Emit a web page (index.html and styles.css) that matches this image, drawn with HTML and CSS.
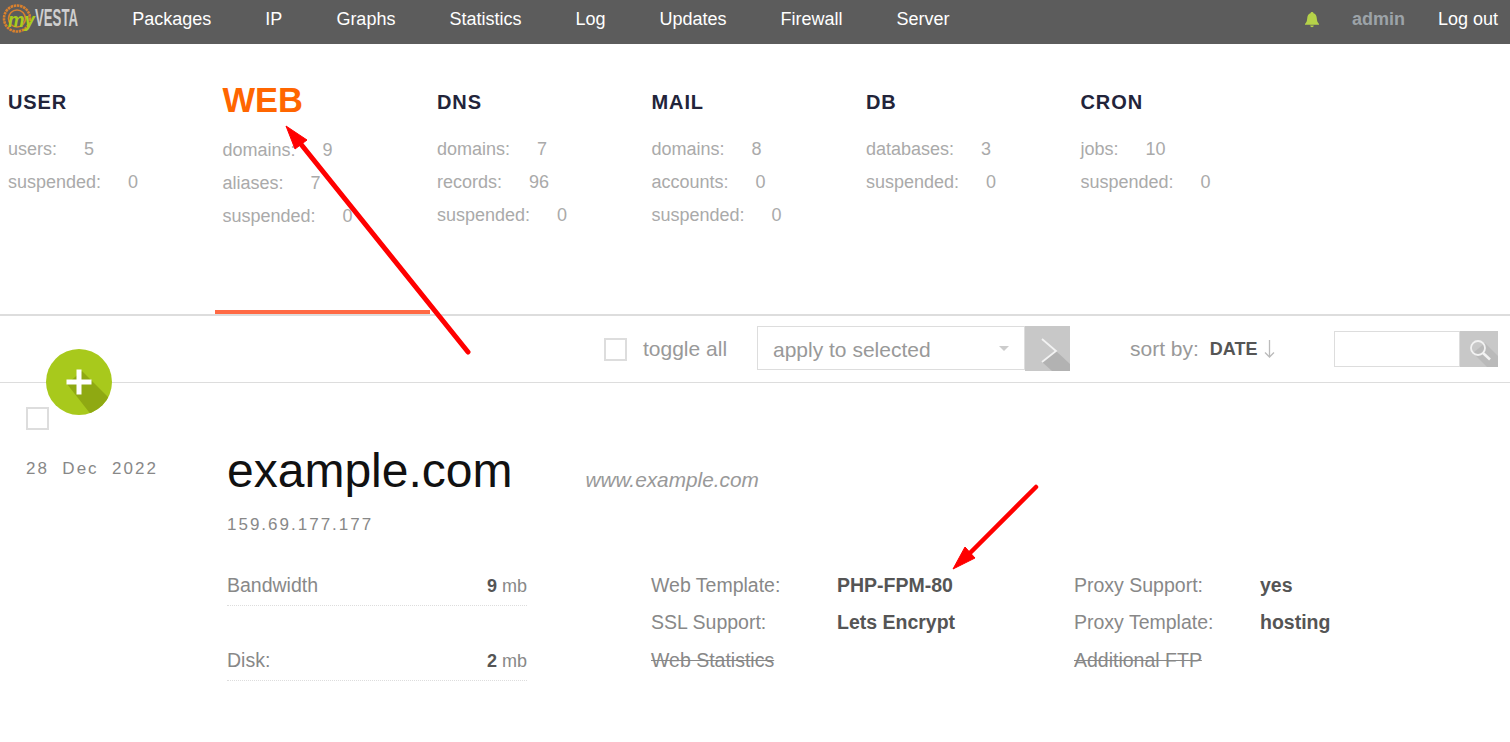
FILE: index.html
```html
<!DOCTYPE html>
<html lang="en">
<head>
<meta charset="utf-8">
<title>myVesta - WEB</title>
<link rel="stylesheet" href="styles.css">
</head>
<body>
<header class="nav">
  <a class="logo" href="#">
    <svg width="100" height="44" viewBox="0 0 100 44">
      <circle cx="17" cy="18.500" r="13" fill="none" stroke="#d9812e" stroke-width="2.600" stroke-dasharray="2.500 0.700"/>
      <circle cx="17" cy="18.500" r="8.500" fill="none" stroke="#d9812e" stroke-width="1.600"/>
      <text transform="translate(8 27) scale(.88 1)" class="logo-my">my</text>
      <text transform="translate(35 26) scale(.55 1)" class="logo-vesta">VESTA</text>
    </svg>
  </a>
  <nav class="menu">
    <a href="#">Packages</a><a href="#">IP</a><a href="#">Graphs</a><a href="#">Statistics</a><a href="#">Log</a><a href="#">Updates</a><a href="#">Firewall</a><a href="#">Server</a>
  </nav>
  <div class="nav-right">
    <svg class="bell" width="16" height="17" viewBox="0 0 16 17"><path d="M8 1c1 0 1.500.6 1.500 1.300C12 3 12.600 5 12.800 7.500c.2 2.500.8 4 2.200 5.500v.8H1V13c1.400-1.500 2-3 2.200-5.500C3.400 5 4 3 6.500 2.300 6.500 1.600 7 1 8 1zM6.200 14.500h3.600C9.600 15.600 9 16.200 8 16.200s-1.600-.6-1.800-1.700z" fill="#b5d249"/></svg>
    <a class="user" href="#">admin</a>
    <a class="logout" href="#">Log out</a>
  </div>
</header>

<section class="tabs">
  <div class="tab">
    <h2>USER</h2>
    <p>users: <b>5</b></p>
    <p>suspended: <b>0</b></p>
  </div>
  <div class="tab active">
    <h2>WEB</h2>
    <p>domains: <b>9</b></p>
    <p>aliases: <b>7</b></p>
    <p>suspended: <b>0</b></p>
  </div>
  <div class="tab">
    <h2>DNS</h2>
    <p>domains: <b>7</b></p>
    <p>records: <b>96</b></p>
    <p>suspended: <b>0</b></p>
  </div>
  <div class="tab">
    <h2>MAIL</h2>
    <p>domains: <b>8</b></p>
    <p>accounts: <b>0</b></p>
    <p>suspended: <b>0</b></p>
  </div>
  <div class="tab">
    <h2>DB</h2>
    <p>databases: <b>3</b></p>
    <p>suspended: <b>0</b></p>
  </div>
  <div class="tab">
    <h2>CRON</h2>
    <p>jobs: <b>10</b></p>
    <p>suspended: <b>0</b></p>
  </div>
</section>

<section class="toolbar">
  <span class="check"></span>
  <span class="toggle">toggle all</span>
  <div class="select">
    <span class="select-box">apply to selected<i class="caret"></i></span>
    <span class="btn btn-go">
      <svg width="45" height="45" viewBox="0 0 45 45"><path d="M17 36L31 25 45 38V45H27z" fill="#b2b2b2"/><path d="M17 13L31 25 17 36" fill="none" stroke="#f2f2f2" stroke-width="1.800"/></svg>
    </span>
  </div>
  <span class="sort">sort by:</span>
  <b class="sort-key">DATE</b>
  <svg class="sort-arrow" width="11" height="18" viewBox="0 0 11 18"><path d="M5.500 0V17M1 12.500L5.500 17 10 12.500" fill="none" stroke="#bbb" stroke-width="1.300"/></svg>
  <div class="search">
    <span class="search-box"></span>
    <span class="btn btn-search">
      <svg width="38" height="36" viewBox="0 0 38 36"><path d="M13 22L27 36H38V25L25 12z" fill="#bababa"/><circle cx="18" cy="17" r="7" fill="none" stroke="#f2f2f2" stroke-width="1.800"/><path d="M23 22L30 28.500" stroke="#f2f2f2" stroke-width="2.600"/></svg>
    </span>
  </div>
</section>

<a class="fab" href="#" aria-label="Add">
  <svg width="66" height="66" viewBox="0 0 66 66">
    <defs><clipPath id="fab-clip"><circle cx="33" cy="33" r="33"/></clipPath></defs>
    <circle cx="33" cy="33" r="33" fill="#a8c91c"/>
    <path d="M21 35L36 22 70 56 50 72z" fill="#8fa912" clip-path="url(#fab-clip)"/>
    <path d="M30.500 20.500h5v10h10v5h-10v10h-5v-10h-10v-5h10z" fill="#fff"/>
  </svg>
</a>

<article class="row">
  <div class="row-side">
    <span class="check"></span>
    <div class="date">28&nbsp; Dec&nbsp; 2022</div>
  </div>
  <div class="row-main">
    <div class="title">
      <h1>example.com</h1>
      <span class="alias">www.example.com</span>
    </div>
    <div class="ip">159.69.177.177</div>
    <div class="details">
      <div class="usage">
        <div class="usage-item"><span>Bandwidth</span><span class="amount"><b>9</b> mb</span></div>
        <div class="usage-item"><span>Disk:</span><span class="amount"><b>2</b> mb</span></div>
      </div>
      <dl class="props">
        <dt>Web Template:</dt><dd>PHP-FPM-80</dd>
        <dt>SSL Support:</dt><dd>Lets Encrypt</dd>
        <dt class="off">Web Statistics</dt><dd></dd>
      </dl>
      <dl class="props">
        <dt>Proxy Support:</dt><dd>yes</dd>
        <dt>Proxy Template:</dt><dd>hosting</dd>
        <dt class="off">Additional FTP</dt><dd></dd>
      </dl>
    </div>
  </div>
</article>

<svg class="arrows" width="1510" height="742" viewBox="0 0 1510 742">
  <path d="M468 352L296 138" stroke="#f00" stroke-width="5" stroke-linecap="round"/>
  <path d="M286 126L307 140 295 149z" fill="#f00" stroke="#f00" stroke-width="1"/>
  <path d="M1036 487L968 555" stroke="#f00" stroke-width="4.500" stroke-linecap="round"/>
  <path d="M953 569L965 547 975 558z" fill="#f00" stroke="#f00" stroke-width="1"/>
</svg>
</body>
</html>
```
FILE: styles.css
```css
* { box-sizing: border-box; }
html, body { margin: 0; padding: 0; }
body {
  position: relative;
  height: 742px;
  overflow: hidden;
  background: #fff;
  font-family: "Liberation Sans", Arial, sans-serif;
  color: #555;
}
a { text-decoration: none; color: inherit; }

.nav {
  display: flex;
  align-items: center;
  height: 44px;
  background: #5c5c5c;
  color: #fff;
  font-size: 18px;
}
.logo { display: block; width: 105.300px; height: 44px; flex: none; }
.logo svg { display: block; }
.logo-my { font: italic bold 21px "Liberation Sans", sans-serif; fill: #a8cc1c; }
.logo-vesta { font: bold 24px "Liberation Sans", sans-serif; fill: #cfcfcf; }
.menu { display: flex; padding-bottom: 6px; }
.menu a { padding: 0 27px; }
.nav-right { display: flex; align-items: center; margin-left: auto; padding-right: 12px; padding-bottom: 6px; }
.bell { margin-right: 32px; }
.user { color: #9ca3a8; font-weight: bold; margin-right: 33px; }

.tabs {
  display: grid;
  grid-template-columns: repeat(6, 214.500px);
  height: 272px;
  border-bottom: 2px solid #ddd;
}
.tab { padding: 46px 8px 0; }
.tab h2 {
  margin: 0 0 19px;
  font-size: 20px;
  line-height: 24px;
  letter-spacing: 0.900px;
  font-weight: bold;
  color: #22243a;
}
.tab p { margin: 0; font-size: 18px; line-height: 33px; color: #aaa; }
.tab p b { font-weight: normal; margin-left: 22px; }
.tab.active { margin-right: -1px; border-bottom: 4px solid #ff6a45; padding-top: 36px; }
.tab.active h2 { font-size: 34.500px; line-height: 40px; letter-spacing: 0; color: #ff6600; margin-bottom: 14px; }

.toolbar {
  display: flex;
  align-items: center;
  height: 67px;
  border-bottom: 1px solid #ddd;
  padding-left: 604px;
  font-size: 21px;
  color: #999;
}
.check {
  display: block;
  width: 23px;
  height: 23px;
  border: 2px solid #ddd;
  background: #fff;
  flex: none;
}
.toggle { margin-left: 16px; width: 114px; }
.select { display: flex; height: 45px; margin-bottom: 2px; }
.select-box {
  position: relative;
  width: 268px;
  height: 44px;
  padding: 0 0 0 15px;
  border: 1px solid #ddd;
  line-height: 46px;
  color: #999;
}
.caret {
  position: absolute;
  right: 15px;
  top: 19px;
  border: 5px solid transparent;
  border-top: 5px solid #ccc;
  border-bottom: 0;
}
.btn { display: block; background: #c8c8c8; flex: none; overflow: hidden; }
.btn svg { display: block; }
.btn-go { width: 45px; height: 45px; }
.sort { margin-left: 60px; }
.sort-key { margin-left: 11px; font-size: 18px; color: #555; }
.sort-arrow { margin-left: 6px; }
.search { display: flex; margin-left: 59px; }
.search-box { display: block; width: 126px; height: 36px; border: 1px solid #ddd; }
.btn-search { width: 38px; height: 36px; }

.fab { position: absolute; left: 46px; top: 349px; width: 66px; height: 66px; }
.fab svg { display: block; }

.row { display: flex; padding-left: 26px; padding-top: 24px; }
.row-side { width: 201px; flex: none; }
.date { margin-top: 29px; font-size: 17px; line-height: 20px; letter-spacing: 2px; color: #888; }
.row-main { flex: 1; }
.title { display: flex; align-items: baseline; margin-top: 34px; }
.title h1 { margin: 0; font-size: 48px; line-height: 60px; font-weight: normal; color: #111; }
.alias { margin-left: 73px; font-size: 20.800px; font-style: italic; color: #999; }
.ip { margin-top: 14px; font-size: 17px; line-height: 20px; letter-spacing: 2px; color: #888; }
.details { display: flex; margin-top: 37px; font-size: 19.500px; color: #888; }
.usage { width: 300px; margin-right: 124px; }
.usage-item {
  position: relative;
  display: flex;
  justify-content: space-between;
  align-items: baseline;
  height: 75px;
  line-height: 26px;
}
.usage-item::after {
  content: "";
  position: absolute;
  left: 0; right: 0; top: 33px;
  border-bottom: 1px dotted #ddd;
}
.amount { font-size: 18px; }
.amount b { color: #555; }
.props {
  display: grid;
  grid-template-columns: 186px 237px;
  grid-template-rows: 37px 38px 38px;
  margin: 0;
  line-height: 26px;
}
.props dt, .props dd { margin: 0; }
.props dd { font-weight: bold; color: #555; }
.off { text-decoration: line-through; }

.arrows { position: absolute; left: 0; top: 0; pointer-events: none; }
```
